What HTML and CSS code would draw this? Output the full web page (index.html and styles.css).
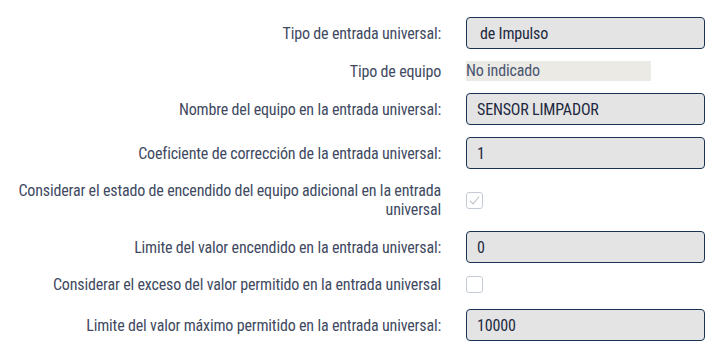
FILE: index.html
```html
<!DOCTYPE html>
<html lang="es">

<head>
    <meta charset="UTF-8">
    <meta name="viewport" content="width=device-width, initial-scale=1.0">
    <title>Entrada universal</title>
    <link rel="stylesheet" href="styles.css">
</head>

<body>
    <form class="settings">
        <div class="row">
            <label class="label">Tipo de entrada universal:</label>
            <div class="field"><input class="input pad-wide" type="text" value="de Impulso" readonly></div>
        </div>
        <div class="row row-short">
            <label class="label">Tipo de equipo</label>
            <div class="field"><span class="static">No indicado</span></div>
        </div>
        <div class="row">
            <label class="label">Nombre del equipo en la entrada universal:</label>
            <div class="field"><input class="input" type="text" value="SENSOR LIMPADOR" readonly></div>
        </div>
        <div class="row">
            <label class="label">Coeficiente de corrección de la entrada universal:</label>
            <div class="field"><input class="input" type="text" value="1" readonly></div>
        </div>
        <div class="row row-check">
            <label class="label">Considerar el estado de encendido del equipo adicional en la entrada universal</label>
            <div class="field"><span class="check checked"></span></div>
        </div>
        <div class="row">
            <label class="label">Limite del valor encendido en la entrada universal:</label>
            <div class="field"><input class="input" type="text" value="0" readonly></div>
        </div>
        <div class="row row-check row-tight">
            <label class="label">Considerar el exceso del valor permitido en la entrada universal</label>
            <div class="field"><span class="check"></span></div>
        </div>
        <div class="row row-after">
            <label class="label">Limite del valor máximo permitido en la entrada universal:</label>
            <div class="field"><input class="input" type="text" value="10000" readonly></div>
        </div>
    </form>
</body>

</html>
```

FILE: styles.css
```css
body {
    margin: 0;
    font-family: Roboto, "Liberation Sans", sans-serif;
    font-size: 16px;
    font-stretch: 75%;
    letter-spacing: -0.17px;
    color: #3f4a62;
    background: #fff;
}

.settings {
    display: flex;
    flex-direction: column;
    gap: 12px;
    padding: 17px 0 0 8px;
}

.row {
    display: flex;
    align-items: center;
    gap: 25px;
    min-height: 32px;
}

.row-short {
    min-height: 20px;
}

.row-check {
    min-height: 22px;
}

.row-tight {
    min-height: 19px;
}

.row-after {
    margin-top: 3px;
}

.label {
    width: 433px;
    text-align: right;
    line-height: 19px;
}

.field {
    width: 239px;
    display: flex;
    align-items: center;
}

.input {
    width: 100%;
    height: 32px;
    box-sizing: border-box;
    padding: 0 10px;
    font-family: inherit;
    font-size: 16px;
    font-stretch: 75%;
    letter-spacing: -0.17px;
    color: #1d2940;
    background-color: #e4e4e4;
    border: 1px solid #1a3458;
    border-radius: 4px;
    outline: none;
}

.pad-wide {
    padding-left: 13px;
}

.static {
    display: block;
    width: 185px;
    height: 20px;
    line-height: 20px;
    background-color: #ebeae4;
    color: #4a5571;
}

.check {
    display: block;
    width: 17px;
    height: 17px;
    box-sizing: border-box;
    border: 1px solid #c5cbd5;
    border-radius: 3px;
    background: #fff;
    position: relative;
}

.check.checked::after {
    content: "";
    position: absolute;
    left: 5px;
    top: 1px;
    width: 4px;
    height: 9px;
    border: solid #b9bfc9;
    border-width: 0 1px 1px 0;
    transform: rotate(40deg);
}
```
